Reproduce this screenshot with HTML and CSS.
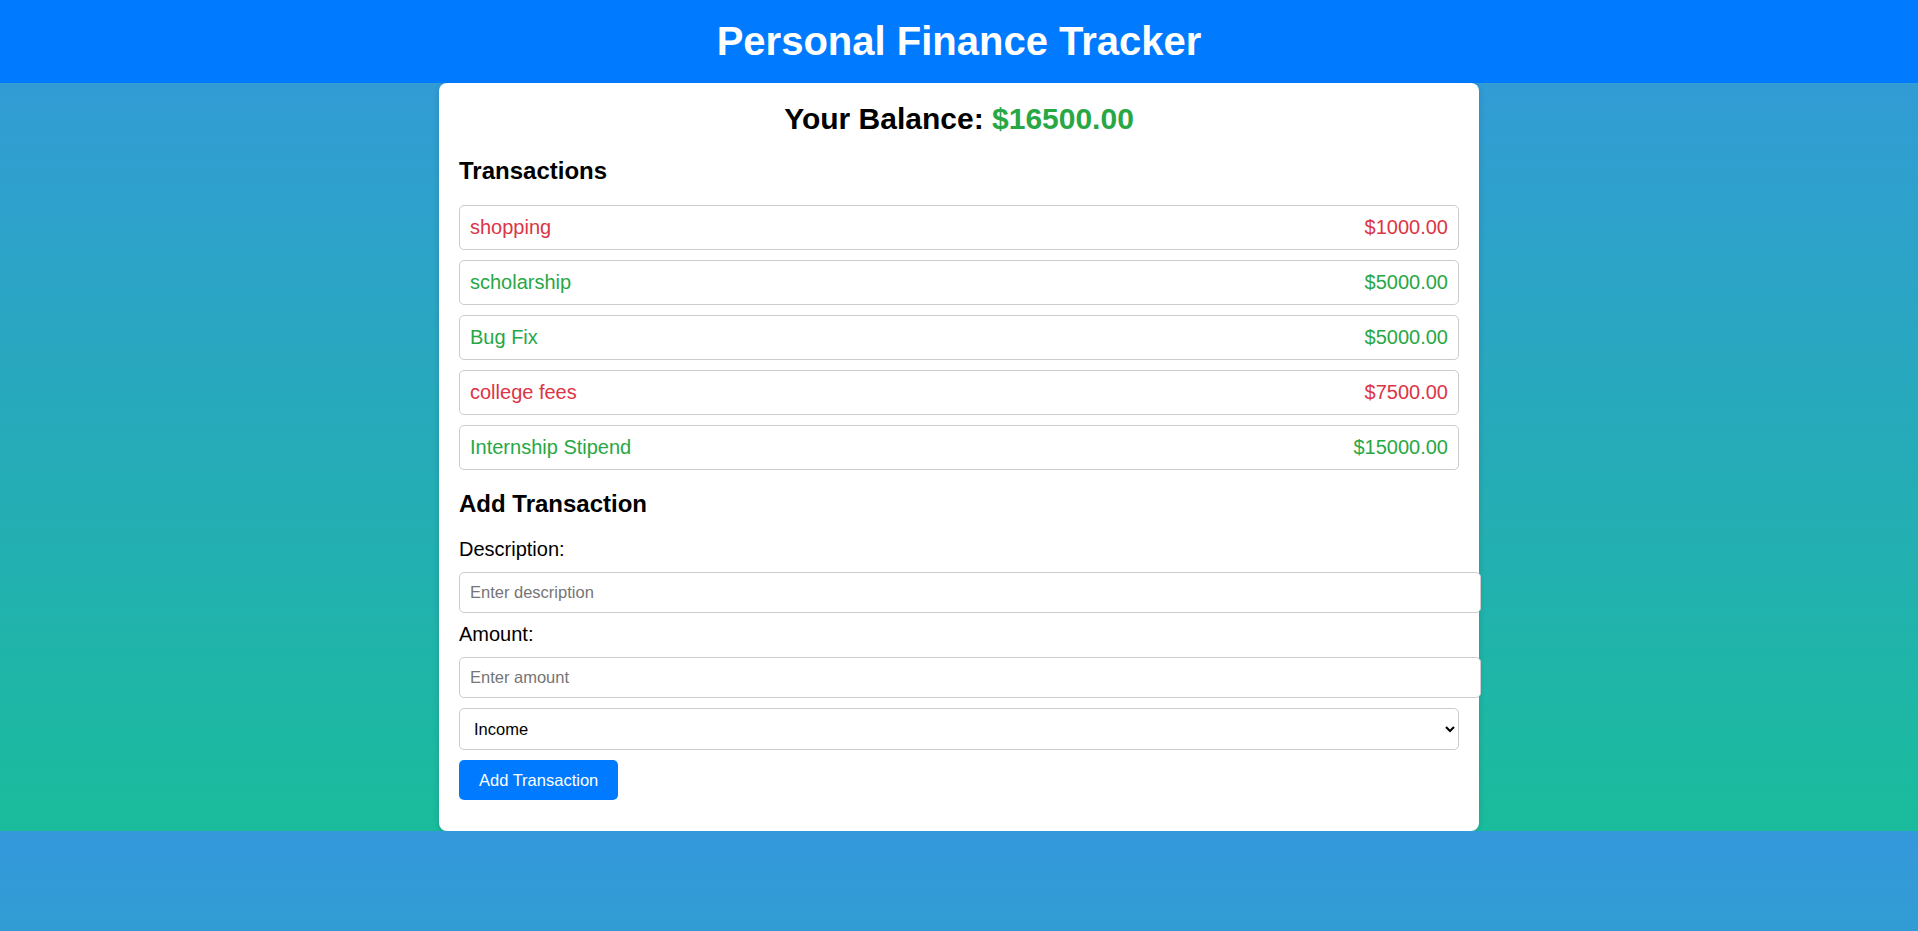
FILE: index.html
```html
<!DOCTYPE html>
<html lang="en">
<head>
<meta charset="UTF-8">
<title>Personal Finance Tracker</title>
<link rel="stylesheet" href="styles.css">
</head>
<body>
<header class="app-header">
  <h1 class="app-title">Personal Finance Tracker</h1>
</header>
<main class="card">
  <h2 class="balance">Your Balance: <span class="balance-amount">$16500.00</span></h2>

  <h3 class="section-title">Transactions</h3>
  <div class="tx-list">
    <div class="tx expense"><span>shopping</span><span>$1000.00</span></div>
    <div class="tx income"><span>scholarship</span><span>$5000.00</span></div>
    <div class="tx income"><span>Bug Fix</span><span>$5000.00</span></div>
    <div class="tx expense"><span>college fees</span><span>$7500.00</span></div>
    <div class="tx income"><span>Internship Stipend</span><span>$15000.00</span></div>
  </div>

  <h3 class="section-title">Add Transaction</h3>
  <form class="tx-form">
    <label class="field-label" for="desc">Description:</label>
    <input class="field-input" id="desc" type="text" placeholder="Enter description">
    <label class="field-label" for="amt">Amount:</label>
    <input class="field-input" id="amt" type="number" placeholder="Enter amount">
    <select class="field-select">
      <option>Income</option>
      <option>Expense</option>
    </select>
    <button class="add-btn" type="button">Add Transaction</button>
  </form>
</main>
</body>
</html>
```
FILE: styles.css
```css
body {
  margin: 0;
  font-family: "Liberation Sans", Arial, sans-serif;
  background: linear-gradient(to bottom, #3498db, #1abc9c);
  color: #000;
}

.app-header {
  background: #007bff;
  color: #fff;
  text-align: center;
  padding: 18px 0 19px;
}

.app-title {
  margin: 0;
  font-size: 40px;
  font-weight: bold;
  line-height: 46px;
}

.card {
  display: block;
  box-sizing: border-box;
  width: 1040px;
  margin: 0 auto;
  padding: 20px;
  background: #fff;
  border-radius: 8px;
  box-shadow: 0 2px 6px rgba(0, 0, 0, 0.15);
}

.balance {
  margin: 0 0 22px;
  font-size: 30px;
  line-height: 32px;
  text-align: center;
  font-weight: bold;
}

.balance-amount {
  color: #28a745;
}

.section-title {
  margin: 20px 0;
  font-size: 24px;
  font-weight: bold;
}

.tx {
  display: flex;
  justify-content: space-between;
  padding: 10px;
  border: 1px solid #ccc;
  border-radius: 5px;
  margin-bottom: 10px;
  font-size: 20px;
}

.tx.expense {
  color: #dc3545;
}

.tx.income {
  color: #28a745;
}

.field-label {
  display: block;
  font-size: 20px;
  margin-bottom: 11px;
}

.field-input {
  display: block;
  width: 100%;
  padding: 10px;
  margin: 0 0 10px;
  border: 1px solid #ccc;
  border-radius: 5px;
  font-family: "Liberation Sans", Arial, sans-serif;
  font-size: 16.5px;
  line-height: 19px;
}

.field-input::placeholder {
  color: #757575;
}

.field-select {
  display: block;
  width: 100%;
  height: 42px;
  padding: 0 10px;
  margin: 0 0 10px;
  border: 1px solid #ccc;
  border-radius: 5px;
  background: #fff;
  color: #000;
  font-family: "Liberation Sans", Arial, sans-serif;
  font-size: 16.5px;
}

.add-btn {
  display: block;
  margin: 0 0 11px;
  padding: 10px 20px;
  border: none;
  border-radius: 5px;
  background: #007bff;
  color: #fff;
  font-family: "Liberation Sans", Arial, sans-serif;
  font-size: 16.5px;
  line-height: 20px;
}
```
